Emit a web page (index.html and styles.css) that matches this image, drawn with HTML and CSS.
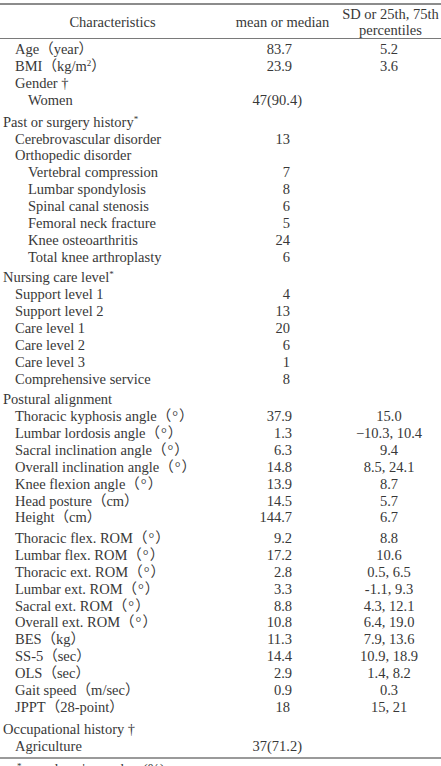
FILE: index.html
```html
<!DOCTYPE html>
<html lang="en">

<head>
    <meta charset="UTF-8">
    <meta name="viewport" content="width=device-width, initial-scale=1.0">
    <title>Participant characteristics</title>
    <link rel="stylesheet" href="styles.css">
</head>

<body>
    <table class="stats">
        <colgroup>
            <col class="col-name">
            <col class="col-mean">
            <col class="col-sd">
        </colgroup>
        <thead>
            <tr>
                <th>Characteristics</th>
                <th>mean or median</th>
                <th>SD or 25th, 75th<br>percentiles</th>
            </tr>
        </thead>
        <tbody>
            <tr class="first">
                <td class="lv1">Age（year）</td>
                <td class="num">83.7</td>
                <td class="sd">5.2</td>
            </tr>
            <tr>
                <td class="lv1">BMI（kg/m<sup>2</sup>）</td>
                <td class="num">23.9</td>
                <td class="sd">3.6</td>
            </tr>
            <tr>
                <td class="lv1">Gender †</td>
                <td class="num"></td>
                <td class="sd"></td>
            </tr>
            <tr>
                <td class="lv2">Women</td>
                <td class="num wide">47(90.4)</td>
                <td class="sd"></td>
            </tr>

            <!-- history -->
            <tr class="gap big">
                <td>Past or surgery history<sup>*</sup></td>
                <td class="num"></td>
                <td class="sd"></td>
            </tr>
            <tr>
                <td class="lv1">Cerebrovascular disorder</td>
                <td class="num int">13</td>
                <td class="sd"></td>
            </tr>
            <tr>
                <td class="lv1">Orthopedic disorder</td>
                <td class="num"></td>
                <td class="sd"></td>
            </tr>
            <tr>
                <td class="lv2">Vertebral compression</td>
                <td class="num int">7</td>
                <td class="sd"></td>
            </tr>
            <tr>
                <td class="lv2">Lumbar spondylosis</td>
                <td class="num int">8</td>
                <td class="sd"></td>
            </tr>
            <tr>
                <td class="lv2">Spinal canal stenosis</td>
                <td class="num int">6</td>
                <td class="sd"></td>
            </tr>
            <tr>
                <td class="lv2">Femoral neck fracture</td>
                <td class="num int">5</td>
                <td class="sd"></td>
            </tr>
            <tr>
                <td class="lv2">Knee osteoarthritis</td>
                <td class="num int">24</td>
                <td class="sd"></td>
            </tr>
            <tr>
                <td class="lv2">Total knee arthroplasty</td>
                <td class="num int">6</td>
                <td class="sd"></td>
            </tr>

            <!-- care level -->
            <tr class="gap">
                <td>Nursing care level<sup>*</sup></td>
                <td class="num"></td>
                <td class="sd"></td>
            </tr>
            <tr>
                <td class="lv1">Support level 1</td>
                <td class="num int">4</td>
                <td class="sd"></td>
            </tr>
            <tr>
                <td class="lv1">Support level 2</td>
                <td class="num int">13</td>
                <td class="sd"></td>
            </tr>
            <tr>
                <td class="lv1">Care level 1</td>
                <td class="num int">20</td>
                <td class="sd"></td>
            </tr>
            <tr>
                <td class="lv1">Care level 2</td>
                <td class="num int">6</td>
                <td class="sd"></td>
            </tr>
            <tr>
                <td class="lv1">Care level 3</td>
                <td class="num int">1</td>
                <td class="sd"></td>
            </tr>
            <tr>
                <td class="lv1">Comprehensive service</td>
                <td class="num int">8</td>
                <td class="sd"></td>
            </tr>

            <!-- posture -->
            <tr class="gap">
                <td>Postural alignment</td>
                <td class="num"></td>
                <td class="sd"></td>
            </tr>
            <tr>
                <td class="lv1">Thoracic kyphosis angle（<span class="deg">°</span>）</td>
                <td class="num">37.9</td>
                <td class="sd">15.0</td>
            </tr>
            <tr>
                <td class="lv1">Lumbar lordosis angle（<span class="deg">°</span>）</td>
                <td class="num">1.3</td>
                <td class="sd">−10.3, 10.4</td>
            </tr>
            <tr>
                <td class="lv1">Sacral inclination angle（<span class="deg">°</span>）</td>
                <td class="num">6.3</td>
                <td class="sd">9.4</td>
            </tr>
            <tr>
                <td class="lv1">Overall inclination angle（<span class="deg">°</span>）</td>
                <td class="num">14.8</td>
                <td class="sd">8.5, 24.1</td>
            </tr>
            <tr>
                <td class="lv1">Knee flexion angle（<span class="deg">°</span>）</td>
                <td class="num">13.9</td>
                <td class="sd">8.7</td>
            </tr>
            <tr>
                <td class="lv1">Head posture（cm）</td>
                <td class="num">14.5</td>
                <td class="sd">5.7</td>
            </tr>
            <tr>
                <td class="lv1">Height（cm）</td>
                <td class="num">144.7</td>
                <td class="sd">6.7</td>
            </tr>

            <!-- range of motion and physical function -->
            <tr class="gap">
                <td class="lv1">Thoracic flex. ROM（<span class="deg">°</span>）</td>
                <td class="num">9.2</td>
                <td class="sd">8.8</td>
            </tr>
            <tr>
                <td class="lv1">Lumbar flex. ROM（<span class="deg">°</span>）</td>
                <td class="num">17.2</td>
                <td class="sd">10.6</td>
            </tr>
            <tr>
                <td class="lv1">Thoracic ext. ROM（<span class="deg">°</span>）</td>
                <td class="num">2.8</td>
                <td class="sd">0.5, 6.5</td>
            </tr>
            <tr>
                <td class="lv1">Lumbar ext. ROM（<span class="deg">°</span>）</td>
                <td class="num">3.3</td>
                <td class="sd">-1.1, 9.3</td>
            </tr>
            <tr>
                <td class="lv1">Sacral ext. ROM（<span class="deg">°</span>）</td>
                <td class="num">8.8</td>
                <td class="sd">4.3, 12.1</td>
            </tr>
            <tr>
                <td class="lv1">Overall ext. ROM（<span class="deg">°</span>）</td>
                <td class="num">10.8</td>
                <td class="sd">6.4, 19.0</td>
            </tr>
            <tr>
                <td class="lv1">BES（kg）</td>
                <td class="num">11.3</td>
                <td class="sd">7.9, 13.6</td>
            </tr>
            <tr>
                <td class="lv1">SS-5（sec）</td>
                <td class="num">14.4</td>
                <td class="sd">10.9, 18.9</td>
            </tr>
            <tr>
                <td class="lv1">OLS（sec）</td>
                <td class="num">2.9</td>
                <td class="sd">1.4, 8.2</td>
            </tr>
            <tr>
                <td class="lv1">Gait speed（m/sec）</td>
                <td class="num">0.9</td>
                <td class="sd">0.3</td>
            </tr>
            <tr>
                <td class="lv1">JPPT（28-point）</td>
                <td class="num int">18</td>
                <td class="sd">15, 21</td>
            </tr>

            <!-- occupation -->
            <tr class="gap big">
                <td>Occupational history †</td>
                <td class="num"></td>
                <td class="sd"></td>
            </tr>
            <tr class="last">
                <td class="lv1">Agriculture</td>
                <td class="num wide">37(71.2)</td>
                <td class="sd"></td>
            </tr>
        </tbody>
    </table>

    <p class="note"><sup>*</sup>: number, †: number (%)</p>
</body>

</html>
```

FILE: styles.css
```css
* {
    box-sizing: border-box;
}

body {
    margin: 0;
    background-color: #FFFFFF;
    color: #383838;
    font-family: "Liberation Serif", "Noto Sans CJK JP", serif;
    font-size: 14.5px;
}

.stats {
    width: 441px;
    margin-top: 3px;
    table-layout: fixed;
    border-collapse: separate;
    border-spacing: 0;
    border-top: 2px solid #8C8C8C;
    border-bottom: 2px solid #9A9A9A;
}

.col-name {
    width: 225px;
}

.col-mean {
    width: 115px;
}

.col-sd {
    width: 101px;
}

.stats th {
    font-weight: normal;
    line-height: 16px;
    height: 31px;
    padding: 1px 0 0;
    text-align: center;
    vertical-align: middle;
    border-bottom: 1px solid #7A7A7A;
}

.stats td {
    padding: 0 0 0 3px;
    line-height: 16.9px;
    white-space: nowrap;
}

.stats td.lv1 {
    padding-left: 15px;
}

.stats td.lv2 {
    padding-left: 28px;
}

.stats td.num {
    text-align: right;
    padding-left: 0;
    padding-right: 48px;
}

.stats td.int {
    padding-right: 50px;
}

.stats td.wide {
    padding-right: 38px;
}

.stats td.sd {
    text-align: center;
    padding-left: 0;
    padding-right: 3px;
}

.stats tr.first td {
    padding-top: 2px;
}

.stats tr.gap td {
    padding-top: 3.5px;
}

.stats tr.gap.big td {
    padding-top: 5px;
}

.stats tr.last td {
    padding-bottom: 2px;
}

sup {
    font-size: 9px;
    line-height: 0;
    vertical-align: 5px;
}

.deg {
    padding: 0 1px;
}

.note {
    margin: 2px 0 0;
    padding-left: 17px;
    line-height: 16px;
}
```
